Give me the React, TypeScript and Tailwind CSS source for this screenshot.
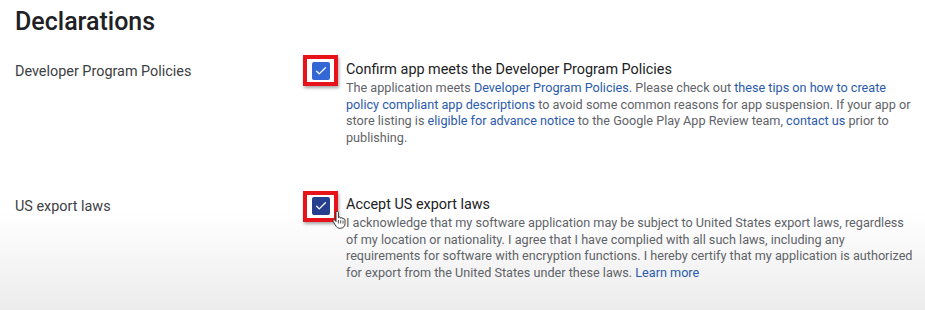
import type { ReactNode } from 'react'

const A = ({ children }: { children: ReactNode }) => (
  <span className="text-[#2a5aab]">{children}</span>
)

function Check({ dark = false }: { dark?: boolean }) {
  return (
    <div className="relative flex h-[31px] w-[35px] shrink-0 items-center justify-center border-[4px] border-[#e8121a] bg-white shadow-[1px_2px_3px_rgba(0,0,0,0.35)]">
      <div className={`flex h-[18px] w-[18px] items-center justify-center rounded-[2px] ${dark ? 'bg-[#263f8f]' : 'bg-[#3367d6]'}`}>
        <svg width="14" height="14" viewBox="0 0 24 24" fill="none">
          <path d="M4.5 12.5l4.5 4.5L19.5 6.5" stroke="white" strokeWidth="2.2" strokeLinecap="round" strokeLinejoin="round" />
        </svg>
      </div>
    </div>
  )
}

function HandCursor() {
  return (
    <svg className="absolute left-[29px] top-[20px]" width="14" height="18" viewBox="0 0 14 18">
      <path
        d="M4 1.5c0-.8.6-1.3 1.2-1.3s1.2.5 1.2 1.3v5.2c.3-.5.8-.7 1.3-.6.6.1 1 .6 1 1.2.3-.4.8-.6 1.3-.5.6.1 1 .6 1 1.2.3-.3.8-.4 1.2-.2.5.2.8.7.8 1.2v3.6c0 2.6-1.8 4.6-4.3 4.6H7.5c-1.5 0-2.6-.7-3.4-1.9L1.2 10.6c-.4-.6-.2-1.3.3-1.6.5-.3 1.2-.2 1.6.3L4 10.5z"
        fill="white"
        stroke="#222"
        strokeWidth="0.9"
        strokeLinejoin="round"
      />
      <path d="M6.4 9v3.5M8.7 9.2v3.3M11 9.6v3" stroke="#222" strokeWidth="0.8" />
    </svg>
  )
}

function Row({
  label,
  title,
  dark,
  cursor,
  labelTop,
  titleTop,
  lines,
}: {
  label: string
  title: string
  dark?: boolean
  cursor?: boolean
  labelTop: string
  titleTop: string
  lines: ReactNode[]
}) {
  return (
    <div className="flex">
      <div className={`w-[288px] shrink-0 text-[14.4px] leading-[20px] text-[#3c4043] ${labelTop}`}>{label}</div>
      <div className="relative">
        <Check dark={dark} />
        {cursor && <HandCursor />}
      </div>
      <div className={`ml-[8px] w-[576px] ${titleTop}`}>
        <div className="text-[14.4px] leading-[20px] text-[#202124]">{title}</div>
        <div className="text-[12.65px] leading-[16.7px] text-[#5f6368]">
          {lines.map((l, i) => (
            <div key={i} className="whitespace-nowrap">
              {l}
            </div>
          ))}
        </div>
      </div>
    </div>
  )
}

export default function App() {
  return (
    <div className="h-[310px] w-[925px] overflow-hidden bg-[linear-gradient(to_bottom,#ffffff_0px,#ffffff_212px,#ececec_310px)] pl-[15px] font-['Roboto',sans-serif]">
      <h1 className="pt-[8px] text-[25px] leading-[28px] font-medium text-[#202124]">Declarations</h1>

      <div className="mt-[19px]">
        <Row
          label="Developer Program Policies"
          title="Confirm app meets the Developer Program Policies"
          labelTop="pt-[7px]"
          titleTop="pt-[5px]"
          lines={[
            <>
              The application meets <A>Developer Program Policies.</A> Please check out{' '}
              <A>these tips on how to create</A>
            </>,
            <>
              <A>policy compliant app descriptions</A> to avoid some common reasons for app suspension. If your app or
            </>,
            <>
              store listing is <A>eligible for advance notice</A> to the Google Play App Review team, <A>contact us</A>{' '}
              prior to
            </>,
            <>publishing.</>,
          ]}
        />
      </div>

      <div className="mt-[44px]">
        <Row
          label="US export laws"
          title="Accept US export laws"
          dark
          cursor
          labelTop="pt-[6px]"
          titleTop="pt-[4px]"
          lines={[
            <>I acknowledge that my software application may be subject to United States export laws, regardless</>,
            <>of my location or nationality. I agree that I have complied with all such laws, including any</>,
            <>requirements for software with encryption functions. I hereby certify that my application is authorized</>,
            <>
              for export from the United States under these laws. <A>Learn more</A>
            </>,
          ]}
        />
      </div>
    </div>
  )
}
